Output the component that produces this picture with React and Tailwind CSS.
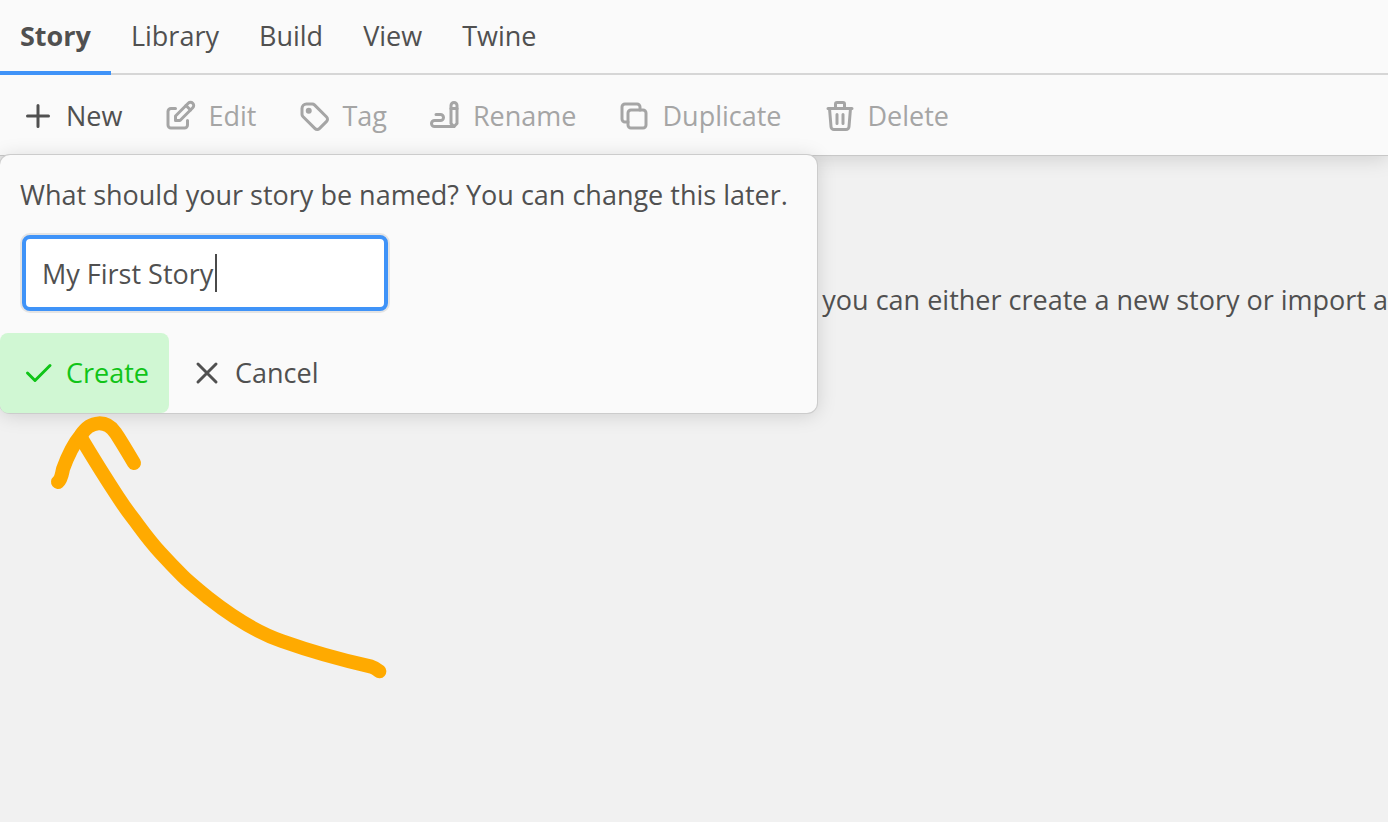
import React from "react";

function Icon({ children }) {
  return (
    <svg
      className="size-9 shrink-0"
      viewBox="0 0 24 24"
      fill="none"
      stroke="currentColor"
      strokeWidth="2"
      strokeLinecap="round"
      strokeLinejoin="round"
      aria-hidden="true"
    >
      {children}
    </svg>
  );
}

const icons = {
  plus: (
    <Icon>
      <path d="M12 5v14M5 12h14" />
    </Icon>
  ),
  edit: (
    <Icon>
      <path d="M9 7h-3a2 2 0 0 0 -2 2v9a2 2 0 0 0 2 2h9a2 2 0 0 0 2 -2v-3" />
      <path d="M9 15h3l8.5 -8.5a1.5 1.5 0 0 0 -3 -3l-8.5 8.5v3" />
      <path d="M16 5l3 3" />
    </Icon>
  ),
  tag: (
    <Icon>
      <circle cx="8.5" cy="8.5" r="1" fill="currentColor" />
      <path d="M4 7v3.859c0 .537 .213 1.052 .593 1.432l8.116 8.116a2.025 2.025 0 0 0 2.864 0l4.834 -4.834a2.025 2.025 0 0 0 0 -2.864l-8.117 -8.116a2.025 2.025 0 0 0 -1.431 -.593h-3.859a3 3 0 0 0 -3 3z" />
    </Icon>
  ),
  rename: (
    <Icon>
      <path d="M20 17v-12c0 -1.121 -.879 -2 -2 -2s-2 .879 -2 2v12l2 2l2 -2z" />
      <path d="M16 7h4" />
      <path d="M18 19h-13a2 2 0 1 1 0 -4h4a2 2 0 1 0 0 -4h-3" />
    </Icon>
  ),
  duplicate: (
    <Icon>
      <rect x="8" y="8" width="12" height="12" rx="2" />
      <path d="M16 8v-2a2 2 0 0 0 -2 -2h-8a2 2 0 0 0 -2 2v8a2 2 0 0 0 2 2h2" />
    </Icon>
  ),
  trash: (
    <Icon>
      <path d="M4 7h16M10 11v6M14 11v6" />
      <path d="M5 7l1 12a2 2 0 0 0 2 2h8a2 2 0 0 0 2 -2l1 -12" />
      <path d="M9 7v-3a1 1 0 0 1 1 -1h4a1 1 0 0 1 1 1v3" />
    </Icon>
  ),
  check: (
    <Icon>
      <path d="M5 12l5 5l10 -10" />
    </Icon>
  ),
  x: (
    <Icon>
      <path d="M18 6l-12 12M6 6l12 12" />
    </Icon>
  ),
};

const tabs = ["Story", "Library", "Build", "View", "Twine"];

const actions = [
  { label: "New", icon: icons.plus },
  { label: "Edit", icon: icons.edit, disabled: true },
  { label: "Tag", icon: icons.tag, disabled: true },
  { label: "Rename", icon: icons.rename, disabled: true },
  { label: "Duplicate", icon: icons.duplicate, disabled: true },
  { label: "Delete", icon: icons.trash, disabled: true },
];

function ToolButton({ icon, label, disabled, className = "" }) {
  return (
    <button
      type="button"
      disabled={disabled}
      className={`flex h-20 items-center gap-2.5 rounded-lg px-5 disabled:text-[#a5a5a5] ${className}`}
    >
      {icon}
      <span>{label}</span>
    </button>
  );
}

function NewStoryCard() {
  return (
    <form className="absolute top-full left-0 -mt-px min-w-[817px] rounded-[10px] bg-[#fafafa] shadow-[0_0_0_1px_#cccccc,0_2px_20px_rgba(0,0,0,0.15)]">
      <div className="px-5 pt-5">
        <label htmlFor="story-name" className="block leading-10 whitespace-nowrap">
          What should your story be named? You can change this later.
        </label>
        <div className="relative mt-5 ml-0.5 w-[366px]">
          <input
            id="story-name"
            type="text"
            defaultValue="My First Story"
            className="block h-19 w-full rounded-lg border-4 border-[#3f93f8] bg-white px-4 caret-transparent shadow-[0_0_0_2px_#e4e4e4] outline-none"
          />
          <span className="absolute top-[19px] left-[193px] h-[38px] w-0.5 bg-[#4a4a4a]" />
        </div>
      </div>
      <div className="mt-[22px] flex">
        <ToolButton icon={icons.check} label="Create" className="bg-[#d0f7d3] text-[#10c418]" />
        <ToolButton icon={icons.x} label="Cancel" />
      </div>
    </form>
  );
}

function Arrow() {
  return (
    <svg
      className="pointer-events-none absolute top-[400px] left-[30px] z-20 h-[290px] w-[370px]"
      viewBox="0 0 1110 870"
      fill="none"
      stroke="#ffaa00"
      strokeWidth="42"
      strokeLinecap="round"
      strokeLinejoin="round"
      aria-hidden="true"
    >
      <path d="M84 246C94 238 96 222 99 207C113 168 133 129 152 106C183 59 230 60 256 98C266 112 290 152 312 189" />
      <path d="M154 115C190 175 228 236 262 288S300 342 325 376S370 435 392 459S436 506 458 528S510 573 536 595C606 650 680 697 755 723C845 755 940 781 1024 800C1034 803 1040 807 1048 814" />
    </svg>
  );
}

export default function App() {
  return (
    <div className="relative min-h-screen overflow-hidden bg-[#f1f1f1] font-['Open_Sans',sans-serif] text-[27px] text-[#505050]">
      <header className="relative z-10 bg-[#fafafa] pb-px shadow-[inset_0_-1px_0_#c8c8c8,0_2px_20px_rgba(0,0,0,0.15)]">
        <nav className="flex h-[75px] border-b-2 border-[#d6d6d6]">
          {tabs.map((tab, i) => (
            <button
              key={tab}
              type="button"
              className={
                i === 0
                  ? "-mb-0.5 border-b-4 border-[#3f93f8] px-5 pt-0.5 font-bold"
                  : "-mb-0.5 border-b-4 border-transparent px-5 pt-0.5"
              }
            >
              {tab}
            </button>
          ))}
        </nav>
        <div className="-mb-px flex pt-px">
          {actions.map((a) => (
            <ToolButton key={a.label} {...a} />
          ))}
        </div>
        <NewStoryCard />
      </header>
      <main className="flex justify-end pt-31">
        <p className="leading-10 whitespace-nowrap">you can either create a new story or import a</p>
      </main>
      <Arrow />
    </div>
  );
}
